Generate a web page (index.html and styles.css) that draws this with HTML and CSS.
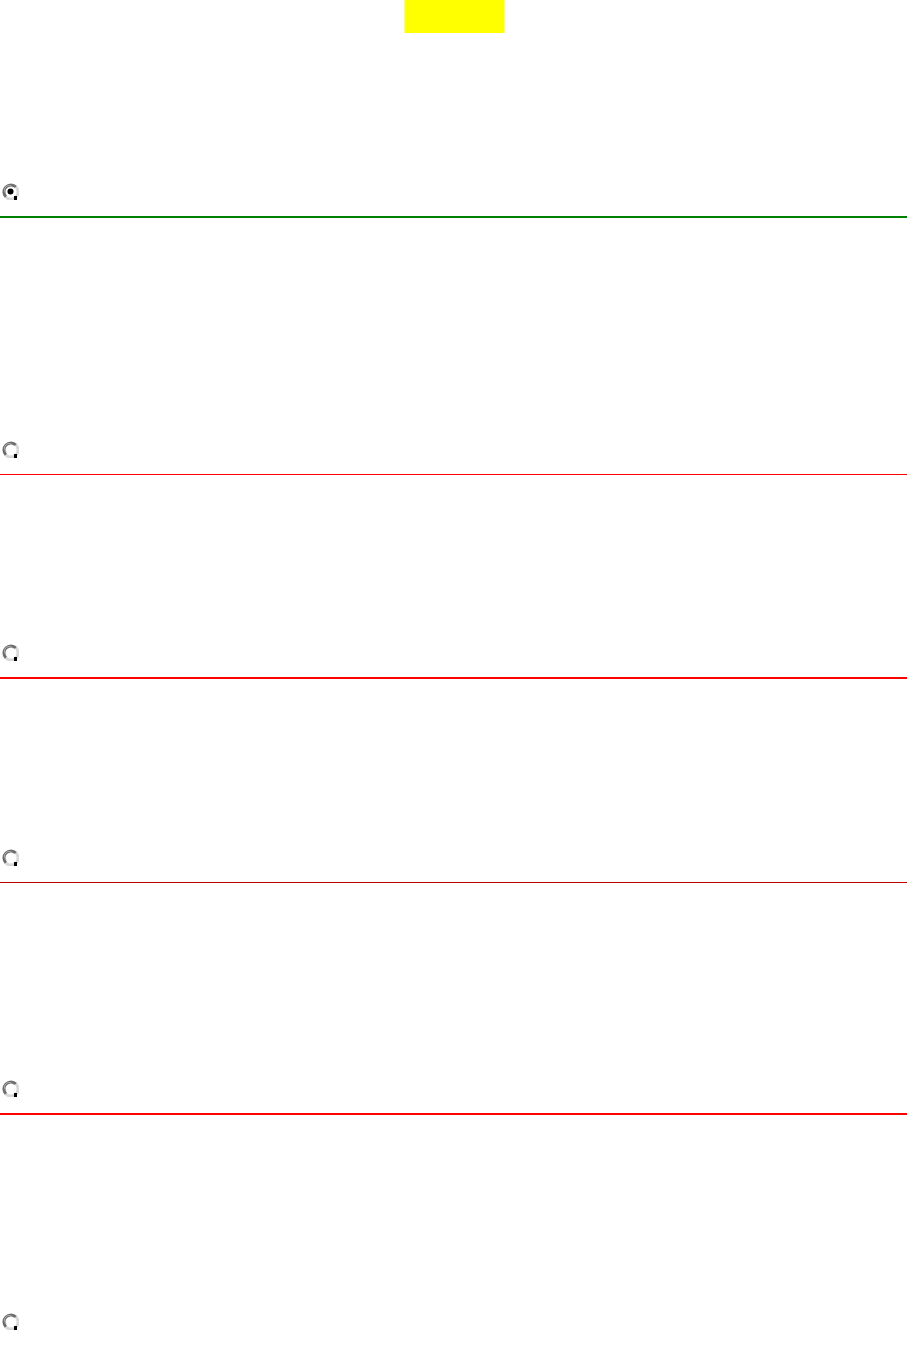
FILE: index.html
```html
<!DOCTYPE html>
<html lang="en">
<head>
    <meta charset="UTF-8">
    <title>Radio rows</title>
    <link rel="stylesheet" href="styles.css">
</head>
<body>
    <svg class="defs" width="0" height="0">
        <defs>
            <symbol id="radio" viewBox="0 0 17 17">
                <path d="M14 4 A7 7 0 1 0 4 14" fill="none" stroke="#6e6e6e" stroke-width="3"/>
                <path d="M4 14 A7 7 0 0 0 14 4" fill="none" stroke="#d8d8d8" stroke-width="3"/>
                <path d="M10.5 4 A4.6 4.6 0 1 0 4 10.5" fill="none" stroke="#b0b0b0" stroke-width="1"/>
                <rect x="12" y="13" width="3" height="4" fill="#000"/>
            </symbol>
        </defs>
    </svg>

    <div class="banner"></div>

    <div class="row row-1 line-green">
        <svg class="radio" width="17" height="17"><use href="#radio"/><circle cx="8.5" cy="8.5" r="3" fill="#000"/></svg>
    </div>
    <div class="row row-2 line-thin">
        <svg class="radio" width="17" height="17"><use href="#radio"/></svg>
    </div>
    <div class="row row-3 line-red">
        <svg class="radio" width="17" height="17"><use href="#radio"/></svg>
    </div>
    <div class="row row-4 line-dark">
        <svg class="radio" width="17" height="17"><use href="#radio"/></svg>
    </div>
    <div class="row row-5 line-red">
        <svg class="radio" width="17" height="17"><use href="#radio"/></svg>
    </div>
    <div class="row row-6">
        <svg class="radio" width="17" height="17"><use href="#radio"/></svg>
    </div>
</body>
</html>
```

FILE: styles.css
```css
body {
    margin: 0;
    padding: 0;
    background-color: #fff;
    font-family: "Liberation Sans", Arial, sans-serif;
}
.defs {
    position: absolute;
    width: 0;
    height: 0;
}
.banner {
    width: 100px;
    height: 33px;
    margin: 0 auto;
    background-color: #ff0;
    transform: translateX(0.5px);
}
.row {
    display: flex;
    align-items: flex-end;
    padding: 0 0 16px 2px;
}
.radio {
    display: block;
}
.row-1 { height: 167px; }
.row-2 { height: 240px; }
.row-3 { height: 186px; }
.row-4 { height: 187px; }
.row-5 { height: 214px; }
.row-6 { height: 17px; padding-top: 198px; padding-bottom: 0; }

.line-green { border-bottom: 2px solid #008000; }
.line-thin { border-bottom: 1px solid #f00; }
.line-red { border-bottom: 2px solid #f00; }
.line-dark { border-bottom: 1px solid #b00; }
```
